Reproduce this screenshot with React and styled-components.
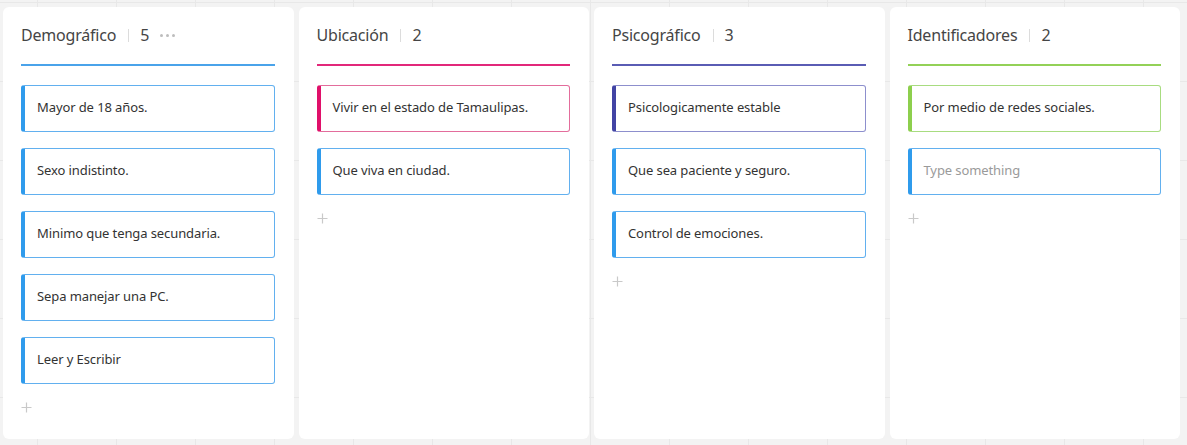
import React from 'react';
import styled, { createGlobalStyle } from 'styled-components';

const GlobalStyle = createGlobalStyle`
  html, body {
    margin: 0;
    padding: 0;
  }
  body {
    font-family: "Noto Sans", "Open Sans", "Liberation Sans", sans-serif;
    background-color: #f3f3f3;
    background-image:
      linear-gradient(to right, #e8e8e8 1px, transparent 1px),
      linear-gradient(to bottom, #e8e8e8 1px, transparent 1px);
    background-size: 79px 79px;
    background-position: 37px 2px;
  }
`;

const columns = [
  {
    title: 'Demográfico',
    color: '#4aa3ea',
    menu: true,
    cards: [
      { text: 'Mayor de 18 años.', tone: 'blue' },
      { text: 'Sexo indistinto.', tone: 'blue' },
      { text: 'Minimo que tenga secundaria.', tone: 'blue' },
      { text: 'Sepa manejar una PC.', tone: 'blue' },
      { text: 'Leer y Escribir', tone: 'blue' },
    ],
  },
  {
    title: 'Ubicación',
    color: '#e2287a',
    cards: [
      { text: 'Vivir en el estado de Tamaulipas.', tone: 'pink' },
      { text: 'Que viva en ciudad.', tone: 'blue' },
    ],
  },
  {
    title: 'Psicográfico',
    color: '#5a5cb4',
    cards: [
      { text: 'Psicologicamente estable', tone: 'indigo' },
      { text: 'Que sea paciente y seguro.', tone: 'blue' },
      { text: 'Control de emociones.', tone: 'blue' },
    ],
  },
  {
    title: 'Identificadores',
    color: '#93d157',
    cards: [
      { text: 'Por medio de redes sociales.', tone: 'green' },
      { text: 'Type something', tone: 'blue', placeholder: true },
    ],
  },
];

const tones = {
  blue: { bar: '#2f9bec', border: '#62b0ef' },
  pink: { bar: '#e0106a', border: '#e36d9c' },
  indigo: { bar: '#4244a4', border: '#8d8fcd' },
  green: { bar: '#8dcf4d', border: '#a8dc80' },
};

function App() {
  return (
    <React.Fragment>
      <GlobalStyle />
      <Board>
        {columns.map((col) => (
          <Column key={col.title}>
            <Header>
              <Title>{col.title}</Title>
              <Separator />
              <Count>{col.cards.length}</Count>
              {col.menu && (
                <Dots>
                  <Dot />
                  <Dot />
                  <Dot />
                </Dots>
              )}
            </Header>
            <Underline color={col.color} />
            <CardList>
              {col.cards.map((card) => (
                <Card key={card.text} tone={card.tone}>
                  <CardText placeholder={card.placeholder}>{card.text}</CardText>
                </Card>
              ))}
            </CardList>
            <AddButton>
              <svg width="11" height="11" viewBox="0 0 11 11">
                <path d="M5.5 0.5v10M0.5 5.5h10" stroke="#c9c9c9" strokeWidth="1.2" fill="none" />
              </svg>
            </AddButton>
          </Column>
        ))}
      </Board>
    </React.Fragment>
  );
}

const Board = styled.div`
  display: grid;
  grid-template-columns: repeat(4, 1fr);
  gap: 5px;
  width: 1180px;
  height: 445px;
  box-sizing: border-box;
  padding: 7px 0 6px 3px;
`;

const Column = styled.section`
  background: #ffffff;
  border-radius: 6px;
  padding: 17px 19px 0 18px;
  display: flex;
  flex-direction: column;
  min-width: 0;
`;

const Header = styled.div`
  display: flex;
  align-items: center;
  height: 22px;
  color: #444;
`;

const Title = styled.span`
  font-size: 16px;
  color: #454545;
  letter-spacing: -0.2px;
`;

const Separator = styled.span`
  width: 1px;
  height: 13px;
  background: #dcdcdc;
  margin: 0 11px 0 12px;
`;

const Count = styled.span`
  font-size: 16px;
  color: #454545;
`;

const Dots = styled.span`
  display: flex;
  gap: 3px;
  margin-left: 11px;
`;

const Dot = styled.span`
  width: 3px;
  height: 3px;
  border-radius: 50%;
  background: #bdbdbd;
`;

const Underline = styled.div`
  height: 2px;
  margin-top: 18px;
  background: ${(props) => props.color};
`;

const CardList = styled.div`
  display: flex;
  flex-direction: column;
  gap: 16px;
  margin-top: 19px;
`;

const Card = styled.div`
  height: 47px;
  box-sizing: border-box;
  display: flex;
  align-items: center;
  border: 1px solid ${(props) => tones[props.tone].border};
  border-left: 4px solid ${(props) => tones[props.tone].bar};
  border-radius: 3px;
  padding: 0 0 3px 12px;
`;

const CardText = styled.span`
  font-size: 13px;
  letter-spacing: -0.1px;
  color: ${(props) => (props.placeholder ? '#9a9a9a' : '#333')};
  white-space: nowrap;
`;

const AddButton = styled.div`
  display: flex;
  align-items: center;
  height: 14px;
  margin-top: 16px;
`;

export default App;
